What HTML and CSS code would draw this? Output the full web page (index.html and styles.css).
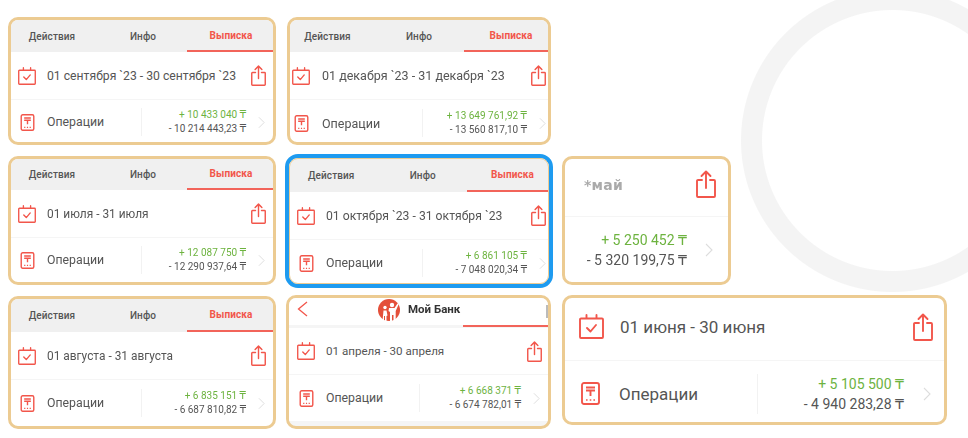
FILE: index.html
```html
<!DOCTYPE html>
<html lang="ru">
<head>
    <meta charset="UTF-8">
    <meta name="viewport" content="width=device-width, initial-scale=1.0">
    <title>Выписка</title>
    <link rel="stylesheet" href="styles.css">
</head>
<body>
    <svg class="defs" width="0" height="0">
        <symbol id="cal" viewBox="0 0 25 25">
            <path d="M2 4.500h21a1 1 0 0 1 1 1V23a1 1 0 0 1-1 1H2a1 1 0 0 1-1-1V5.500a1 1 0 0 1 1-1z M7.500 1v3.500 M17.500 1v3.500 M8 14l3.500 3.500L17 11" fill="none" stroke="currentColor" stroke-width="1.900" stroke-linejoin="round" stroke-linecap="round"/>
        </symbol>
        <symbol id="share" viewBox="0 0 20 28">
            <path d="M6 10H2a1 1 0 0 0-1 1v15a1 1 0 0 0 1 1h16a1 1 0 0 0 1-1V11a1 1 0 0 0-1-1h-4 M10 18V1.500 M5.500 6L10 1.500 14.500 6" fill="none" stroke="currentColor" stroke-width="1.900" stroke-linejoin="round" stroke-linecap="round"/>
        </symbol>
        <symbol id="oper" viewBox="0 0 19 23">
            <rect x="1" y="1" width="17" height="21" rx="2" fill="none" stroke="currentColor" stroke-width="1.900"/>
            <path d="M5 5.500h9 M5 8.500h9 M9.500 8.500V14" fill="none" stroke="currentColor" stroke-width="1.900"/>
            <path d="M5 18h1.600 M8.700 18h1.600 M12.400 18H14" fill="none" stroke="currentColor" stroke-width="1.700"/>
        </symbol>
        <symbol id="chev" viewBox="0 0 8 14">
            <path d="M1 1l6 6-6 6" fill="none" stroke="currentColor" stroke-width="1.100"/>
        </symbol>
    </svg>

    <main class="board">
        <section class="card card-row1">
            <div class="tabs"><span>Действия</span><span>Инфо</span><span class="active">Выписка</span></div>
            <div class="period">
                <svg class="ico-cal"><use href="#cal"/></svg>
                <span class="dates">01 сентября `23 - 30 сентября `23</span>
                <svg class="ico-share"><use href="#share"/></svg>
            </div>
            <div class="ops">
                <svg class="ico-oper"><use href="#oper"/></svg>
                <span class="ops-label">Операции</span>
                <div class="sums"><span class="plus">+ 10 433 040 ₸</span><span class="minus">- 10 214 443,23 ₸</span></div>
                <svg class="ico-chev"><use href="#chev"/></svg>
            </div>
        </section>

        <section class="card card-second">
            <div class="tabs"><span>Действия</span><span>Инфо</span><span class="active">Выписка</span></div>
            <div class="period">
                <svg class="ico-cal"><use href="#cal"/></svg>
                <span class="dates">01 декабря `23 - 31 декабря `23</span>
                <svg class="ico-share"><use href="#share"/></svg>
            </div>
            <div class="ops">
                <svg class="ico-oper"><use href="#oper"/></svg>
                <span class="ops-label">Операции</span>
                <div class="sums"><span class="plus">+ 13 649 761,92 ₸</span><span class="minus">- 13 560 817,10 ₸</span></div>
                <svg class="ico-chev"><use href="#chev"/></svg>
            </div>
        </section>

        <div class="empty"></div>

        <section class="card card-row2">
            <div class="tabs"><span>Действия</span><span>Инфо</span><span class="active">Выписка</span></div>
            <div class="period">
                <svg class="ico-cal"><use href="#cal"/></svg>
                <span class="dates">01 июля - 31 июля</span>
                <svg class="ico-share"><use href="#share"/></svg>
            </div>
            <div class="ops">
                <svg class="ico-oper"><use href="#oper"/></svg>
                <span class="ops-label">Операции</span>
                <div class="sums"><span class="plus">+ 12 087 750 ₸</span><span class="minus">- 12 290 937,64 ₸</span></div>
                <svg class="ico-chev"><use href="#chev"/></svg>
            </div>
        </section>

        <section class="card card-selected">
            <div class="tabs"><span>Действия</span><span>Инфо</span><span class="active">Выписка</span></div>
            <div class="period">
                <svg class="ico-cal"><use href="#cal"/></svg>
                <span class="dates">01 октября `23 - 31 октября `23</span>
                <svg class="ico-share"><use href="#share"/></svg>
            </div>
            <div class="ops">
                <svg class="ico-oper"><use href="#oper"/></svg>
                <span class="ops-label">Операции</span>
                <div class="sums"><span class="plus">+ 6 861 105 ₸</span><span class="minus">- 7 048 020,34 ₸</span></div>
                <svg class="ico-chev"><use href="#chev"/></svg>
            </div>
        </section>

        <section class="card card-small">
            <div class="period">
                <span class="month">*май</span>
                <svg class="ico-share"><use href="#share"/></svg>
            </div>
            <div class="ops">
                <div class="sums"><span class="plus">+ 5 250 452 ₸</span><span class="minus">- 5 320 199,75 ₸</span></div>
                <svg class="ico-chev"><use href="#chev"/></svg>
            </div>
        </section>

        <section class="card card-row3">
            <div class="tabs"><span>Действия</span><span>Инфо</span><span class="active">Выписка</span></div>
            <div class="period">
                <svg class="ico-cal"><use href="#cal"/></svg>
                <span class="dates">01 августа - 31 августа</span>
                <svg class="ico-share"><use href="#share"/></svg>
            </div>
            <div class="ops">
                <svg class="ico-oper"><use href="#oper"/></svg>
                <span class="ops-label">Операции</span>
                <div class="sums"><span class="plus">+ 6 835 151 ₸</span><span class="minus">- 6 687 810,82 ₸</span></div>
                <svg class="ico-chev"><use href="#chev"/></svg>
            </div>
        </section>

        <section class="card card-bank">
            <div class="bank-head">
                <svg class="back" viewBox="0 0 11 16"><path d="M10 1L1.500 8l8.500 7" fill="none" stroke="currentColor" stroke-width="1.300"/></svg>
                <svg class="bank-logo" viewBox="0 0 22 22">
                    <circle cx="11" cy="11" r="11" fill="#e4503a"/>
                    <circle cx="14" cy="6" r="2.200" fill="#fff"/>
                    <circle cx="7" cy="8.500" r="1.700" fill="#fff"/>
                    <path d="M11 9h5.500l3-4.500 1.200.8-3 6.700v10h-2.200v-6h-1.500v6H12v-9l-1.500-1z M5.500 11.500h3l1 5-1 .5v5H7v-5H6v5H4.500z" fill="#fff"/>
                </svg>
                <span class="bank-name">Мой Банк</span>
                <span class="bank-mark"></span>
            </div>
            <div class="period">
                <svg class="ico-cal"><use href="#cal"/></svg>
                <span class="dates">01 апреля - 30 апреля</span>
                <svg class="ico-share"><use href="#share"/></svg>
            </div>
            <div class="ops">
                <svg class="ico-oper"><use href="#oper"/></svg>
                <span class="ops-label">Операции</span>
                <div class="sums"><span class="plus">+ 6 668 371 ₸</span><span class="minus">- 6 674 782,01 ₸</span></div>
                <svg class="ico-chev"><use href="#chev"/></svg>
            </div>
        </section>

        <section class="card card-large">
            <div class="period">
                <svg class="ico-cal"><use href="#cal"/></svg>
                <span class="dates">01 июня - 30 июня</span>
                <svg class="ico-share"><use href="#share"/></svg>
            </div>
            <div class="ops">
                <svg class="ico-oper"><use href="#oper"/></svg>
                <span class="ops-label">Операции</span>
                <div class="sums"><span class="plus">+ 5 105 500 ₸</span><span class="minus">- 4 940 283,28 ₸</span></div>
                <svg class="ico-chev"><use href="#chev"/></svg>
            </div>
        </section>
    </main>
</body>
</html>
```

FILE: styles.css
```css
body {
    margin: 0;
    /* big grey ring behind the cards */
    background: radial-gradient(circle at 892.5px 140.5px, #fff 130px, #f4f4f4 131px, #f4f4f4 151px, #fff 152px);
    background-color: #fff;
    height: 438px;
    font-family: Roboto, "DejaVu Sans", sans-serif;
    color: #555;
    overflow: hidden;
}
.defs {
    display: block;
    height: 0;
}
.board {
    display: grid;
    grid-template-columns: 268px 264px 385px;
    grid-template-rows: 128px 129px 133px;
    column-gap: 11px;
    row-gap: 11px;
    padding: 17px 0 0 8px;
    filter: blur(0.3px);
}
.card {
    display: flex;
    flex-direction: column;
    box-sizing: border-box;
    border: 3px solid #eccb92;
    border-radius: 10px;
    background-color: #fff;
    overflow: hidden;
}
.tabs {
    display: grid;
    grid-template-columns: 1fr 1fr 86px;
    box-sizing: border-box;
    height: 32px;
    flex-shrink: 0;
    background-color: #f0f0f0;
    font-size: 10px;
    font-weight: 500;
    color: #555;
    letter-spacing: 0.1px;
}
.tabs span {
    display: flex;
    align-items: center;
    justify-content: center;
    box-sizing: border-box;
}
.tabs span:first-child {
    padding-right: 6px;
}
.tabs .active {
    color: #f2564b;
    font-weight: 700;
    padding-left: 2px;
    border-bottom: 2px solid #f2645a;
}
.period {
    display: flex;
    align-items: center;
    flex-shrink: 0;
    height: 47px;
    padding: 0 7px;
    border-bottom: 1px solid #f5f5f5;
}
.ops {
    flex: 1;
    display: flex;
    align-items: center;
    padding: 0 8px 0 9px;
}
.ico-cal {
    width: 18px;
    height: 18px;
    flex-shrink: 0;
    color: #f2564b;
    margin-right: 11px;
}
.ico-share {
    width: 15px;
    height: 21px;
    flex-shrink: 0;
    color: #f2564b;
    margin-left: auto;
}
.ico-oper {
    width: 15px;
    height: 17px;
    flex-shrink: 0;
    color: #f2564b;
    margin-right: 12px;
}
.ico-chev {
    width: 7px;
    height: 13px;
    flex-shrink: 0;
    color: #ddd;
    margin-left: 12px;
}
.dates {
    font-size: 12.2px;
    color: #555;
    white-space: nowrap;
}
.ops-label {
    font-size: 12.3px;
    color: #555;
}
.sums {
    margin-left: auto;
    box-sizing: border-box;
    width: 105px;
    height: 28px;
    display: flex;
    flex-direction: column;
    align-items: flex-end;
    justify-content: center;
    line-height: 14px;
    border-left: 1px solid #f2f2f2;
    font-size: 10px;
    white-space: nowrap;
}
.plus {
    color: #6db33f;
}
.minus {
    color: #555;
}

/* rows are not quite the same height in the collage */
.card-row1 .ops {
    padding-top: 2px;
}
.card-row2 .tabs {
    height: 31px;
}
.card-row3 .tabs {
    height: 33px;
}
.card-row2 .dates,
.card-row3 .dates {
    font-size: 11.9px;
}

.card-second .tabs {
    grid-template-columns: 1fr 1fr 84px;
}
.card-second .tabs span:first-child {
    padding-right: 12px;
}
.card-second .tabs span:nth-child(2) {
    padding-right: 3px;
}
.card-second .tabs .active {
    padding-left: 10px;
}
.card-second .period {
    padding: 0 2px;
}
.card-second .ico-cal {
    margin-right: 12px;
}
.card-second .dates,
.card-second .ops-label {
    font-size: 12.500px;
}
.card-second .ops {
    padding: 4px 2px 0 4px;
}
.card-second .ico-oper {
    margin-right: 13px;
}

.card-selected {
    margin: -2px -2px -3px;
    border: 4px solid #1e9bf0;
    border-radius: 13px;
    outline: 1px solid #eccb92;
    outline-offset: -5px;
}
.card-selected .tabs {
    height: 33px;
    margin: 1px 1px 0;
    grid-template-columns: 1fr 1fr 81px;
}
.card-selected .tabs .active {
    padding-left: 10px;
}
.card-selected .period {
    padding: 0 3px 0 8px;
}
.card-selected .ops {
    padding: 2px 3px 0 10px;
}

.card-small {
    width: 169px;
}
.card-small .period {
    height: 57px;
    padding: 0 12px 0 19px;
}
.month {
    font-family: "DejaVu Sans", sans-serif;
    font-size: 14px;
    font-weight: bold;
    color: #aaa;
    letter-spacing: 0.3px;
    margin-top: -5px;
}
.card-small .ico-share {
    width: 20px;
    height: 28px;
    margin-top: -8px;
}
.card-small .ops {
    padding: 0 15px 0 0;
}
.card-small .sums {
    width: auto;
    height: 42px;
    line-height: 20px;
    border: none;
    font-size: 14px;
}
.card-small .ico-chev {
    width: 8px;
    height: 14px;
    margin-left: 18px;
}

.card-bank {
    margin: -1px 0 0 -1px;
    background-color: #f5f5f5;
}
.bank-head {
    display: flex;
    align-items: center;
    flex-shrink: 0;
    height: 30px;
    padding-left: 8px;
    position: relative;
    box-sizing: border-box;
    background-color: #fff;
    border-bottom: 3px solid #f5f5f5;
}
.bank-head::after {
    content: "";
    position: absolute;
    right: 0;
    bottom: -2px;
    width: 85px;
    height: 2px;
    background-color: #f2645a;
}
.bank-mark {
    position: absolute;
    right: 0;
    top: 7px;
    width: 2px;
    height: 13px;
    background-color: #bbb;
}
.back {
    width: 11px;
    height: 16px;
    color: #f2564b;
    margin-right: 70px;
    margin-top: -6px;
}
.bank-logo {
    width: 22px;
    height: 22px;
    margin-top: -4px;
}
.bank-name {
    font-size: 11.500px;
    font-weight: 700;
    color: #333;
    margin-left: 8px;
    margin-top: -6px;
}
.card-bank .period {
    height: 46px;
    padding: 0 6px 0 8px;
    background-color: #fff;
}
.card-bank .dates {
    font-size: 11.600px;
}
.card-bank .ops {
    padding: 0 8px 0 10px;
    margin-bottom: 5px;
    background-color: #fff;
}
.card-bank .sums {
    width: 102px;
}

.card-large {
    height: 130px;
    margin-top: -1px;
}
.card-large .period {
    box-sizing: border-box;
    height: 63px;
    padding: 0 11px 5px 14px;
}
.card-large .dates {
    font-size: 17px;
}
.card-large .ops-label {
    font-size: 17px;
}
.card-large .ico-cal {
    width: 25px;
    height: 25px;
    margin-right: 16px;
}
.card-large .ico-share {
    width: 20px;
    height: 28px;
}
.card-large .ops {
    padding: 4px 13px 0 16px;
}
.card-large .ico-oper {
    width: 19px;
    height: 23px;
    margin-right: 19px;
}
.card-large .sums {
    width: 147px;
    height: 40px;
    line-height: 20px;
    font-size: 14px;
}
.card-large .ico-chev {
    width: 8px;
    height: 14px;
    margin-left: 19px;
}
```
